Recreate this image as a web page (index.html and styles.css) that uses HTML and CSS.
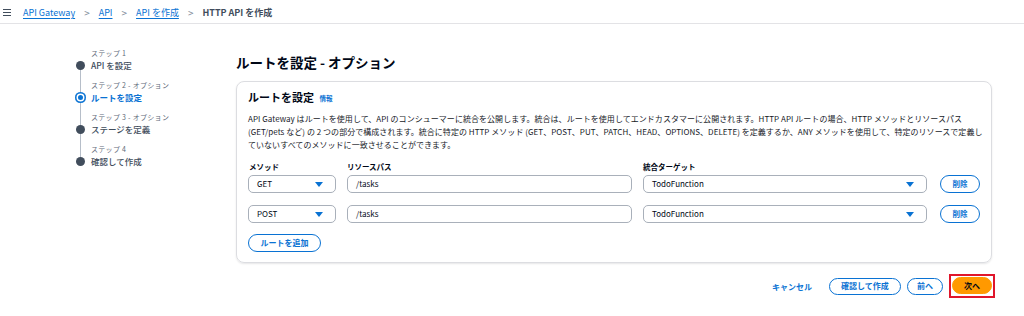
FILE: index.html
```html
<!DOCTYPE html>
<html lang="ja">
<head>
<meta charset="utf-8">
<title>HTTP API を作成</title>
<link rel="stylesheet" href="styles.css">
</head>
<body>
<header class="topbar">
  <span class="menu"><i></i><i></i><i></i></span>
  <nav class="crumbs">
    <a href="#">API Gateway</a><span class="sep">&gt;</span>
    <a href="#">API</a><span class="sep">&gt;</span>
    <a href="#">API を作成</a><span class="sep">&gt;</span>
    <span class="current">HTTP API を作成</span>
  </nav>
</header>
<main class="layout">
  <ol class="steps">
    <li class="step">
      <span class="step-num">ステップ 1</span>
      <span class="dot"></span>
      <span class="step-name">API を設定</span>
    </li>
    <li class="step active">
      <span class="step-num">ステップ 2 - オプション</span>
      <span class="dot"></span>
      <span class="step-name">ルートを設定</span>
    </li>
    <li class="step">
      <span class="step-num">ステップ 3 - オプション</span>
      <span class="dot"></span>
      <span class="step-name">ステージを定義</span>
    </li>
    <li class="step last">
      <span class="step-num">ステップ 4</span>
      <span class="dot"></span>
      <span class="step-name">確認して作成</span>
    </li>
  </ol>
  <section class="content">
    <h1 class="page-title">ルートを設定 - オプション</h1>
    <div class="card">
      <h2 class="card-title">ルートを設定 <a class="info" href="#">情報</a></h2>
      <p class="desc">API Gateway はルートを使用して、API のコンシューマーに統合を公開します。統合は、ルートを使用してエンドカスタマーに公開されます。HTTP API ルートの場合、HTTP メソッドとリソースパス (GET/pets など) の 2 つの部分で構成されます。統合に特定の HTTP メソッド (GET、POST、PUT、PATCH、HEAD、OPTIONS、DELETE) を定義するか、ANY メソッドを使用して、特定のリソースで定義していないすべてのメソッドに一致させることができます。</p>
      <div class="route-head">
        <span class="label">メソッド</span>
        <span class="label">リソースパス</span>
        <span class="label">統合ターゲット</span>
      </div>
      <div class="route-row">
        <div class="field select">GET<span class="caret"></span></div>
        <div class="field">/tasks</div>
        <div class="field select">TodoFunction<span class="caret"></span></div>
        <button class="btn small">削除</button>
      </div>
      <div class="route-row">
        <div class="field select">POST<span class="caret"></span></div>
        <div class="field">/tasks</div>
        <div class="field select">TodoFunction<span class="caret"></span></div>
        <button class="btn small">削除</button>
      </div>
      <button class="btn add">ルートを追加</button>
    </div>
    <div class="actions">
      <a class="cancel" href="#">キャンセル</a>
      <button class="btn confirm">確認して作成</button>
      <button class="btn prev">前へ</button>
      <span class="highlight"><button class="btn primary">次へ</button></span>
    </div>
  </section>
</main>
</body>
</html>
```

FILE: styles.css
```css
* { box-sizing: border-box; }
html, body { margin: 0; padding: 0; background: #fff; }
body {
  font-family: "Noto Sans CJK JP", "Noto Sans", sans-serif;
  color: #000716;
  width: 1024px;
  height: 316px;
  overflow: hidden;
}
a { color: #0972d3; }

.topbar {
  height: 24px;
  border-bottom: 1px solid #e3e3e6;
  display: flex;
  align-items: center;
  padding-left: 3px;
  padding-top: 2px;
}
.menu {
  display: flex;
  flex-direction: column;
  gap: 2px;
  width: 8px;
  margin-right: 12px;
}
.menu i { display: block; height: 1px; background: #414d5c; }
.crumbs {
  display: flex;
  align-items: center;
  font-size: 9px;
  line-height: 12px;
}
.crumbs a { text-decoration: underline; text-underline-offset: 2px; }
.crumbs .sep { color: #7d8998; margin: 0 9px; font-size: 10px; }
.crumbs .current { color: #414d5c; font-weight: 700; }

.layout {
  display: grid;
  grid-template-columns: 236px 756px;
}

.steps {
  list-style: none;
  margin: 0;
  padding: 24px 0 0 71px;
}
.step {
  display: grid;
  grid-template-columns: 18px auto;
  column-gap: 2px;
  grid-template-rows: 10px 14px;
  margin-bottom: 8px;
}
.step-num {
  grid-column: 2;
  grid-row: 1;
  font-size: 7px;
  line-height: 10px;
  color: #5f6b7a;
  letter-spacing: 0.3px;
}
.step-name {
  grid-column: 2;
  grid-row: 2;
  font-size: 8.5px;
  line-height: 14px;
  color: #414d5c;
  font-weight: 500;
}
.dot {
  grid-column: 1;
  grid-row: 2;
  align-self: center;
  justify-self: center;
  width: 9px;
  height: 9px;
  border-radius: 50%;
  background: #414d5c;
  position: relative;
}
.dot::after {
  content: "";
  position: absolute;
  left: 4px;
  top: 9px;
  width: 1px;
  height: 23px;
  background: #b6bec9;
}
.step.last .dot::after { display: none; }
.step.active .step-name { color: #0972d3; font-weight: 700; }
.step.active .dot {
  width: 11px;
  height: 11px;
  background: #0972d3;
  box-shadow: inset 0 0 0 1.5px #0972d3, inset 0 0 0 3px #fff;
}
.step.active .dot::after { left: 5px; top: 11px; height: 22px; }

.content { padding-top: 28px; }
.page-title {
  margin: 0 0 9px;
  font-size: 13.5px;
  line-height: 20px;
  font-weight: 700;
}
.card {
  border: 1px solid #dcdde1;
  border-radius: 8px;
  box-shadow: 0 1px 2px rgba(0, 7, 22, 0.1);
  padding: 7px 11px 10px 11px;
}
.card-title {
  margin: 0;
  font-size: 11px;
  line-height: 16px;
  font-weight: 700;
}
.info {
  font-size: 6.5px;
  text-decoration: none;
  margin-left: 3px;
  font-weight: 700;
  vertical-align: 1px;
}
.desc {
  margin: 6px -6px 0 0;
  font-size: 8px;
  line-height: 13px;
  color: #16191f;
  letter-spacing: 0.04px;
}
.route-head, .route-row {
  display: grid;
  grid-template-columns: 88px 285px 284px 40px;
  column-gap: 11px;
  align-items: center;
}
.route-head { margin-top: 10px; padding-left: 1px; }
.route-head .label:nth-child(2) { margin-left: -1px; }
.route-head .label:nth-child(3) { margin-left: -1px; }
.route-row { margin-top: 3px; }
.route-row + .route-row { margin-top: 12px; }
.route-row .btn.small { margin-left: 2px; }
.label {
  font-size: 7.5px;
  font-weight: 700;
  line-height: 11px;
  color: #000716;
}
.field {
  height: 18px;
  border: 1px solid #a9b0ba;
  border-radius: 5px;
  font-size: 8px;
  line-height: 16px;
  padding: 0 8px;
  color: #000716;
  display: flex;
  align-items: center;
  justify-content: space-between;
}
.caret {
  width: 0;
  height: 0;
  border-left: 4px solid transparent;
  border-right: 4px solid transparent;
  border-top: 5px solid #0972d3;
  margin-right: 4px;
}
.btn {
  font-family: inherit;
  font-size: 8px;
  font-weight: 700;
  border-radius: 999px;
  border: 1.5px solid #0972d3;
  background: #fff;
  color: #0972d3;
  height: 18px;
  padding: 0 12px;
  line-height: 14px;
  cursor: pointer;
  display: block;
}
.btn.small { width: 40px; padding: 0; font-size: 7.5px; }
.btn.add { margin-top: 11px; width: 73px; padding: 0; }
.actions {
  display: flex;
  justify-content: flex-end;
  align-items: center;
  margin-top: 11px;
}
.cancel {
  font-size: 8px;
  font-weight: 700;
  text-decoration: none;
  margin-right: 17px;
}
.actions .btn { height: 17px; }
.btn.confirm { width: 72px; padding: 0; margin-right: 6px; }
.btn.prev { width: 36px; padding: 0; margin-right: 6px; }
.highlight {
  display: block;
  border: 2px solid #e0162b;
  padding: 1px 1px 2px;
  margin-right: -3px;
}
.btn.primary {
  width: 40px;
  padding: 0;
  background: #ff9900;
  border-color: #ff9900;
  color: #000716;
}
```
